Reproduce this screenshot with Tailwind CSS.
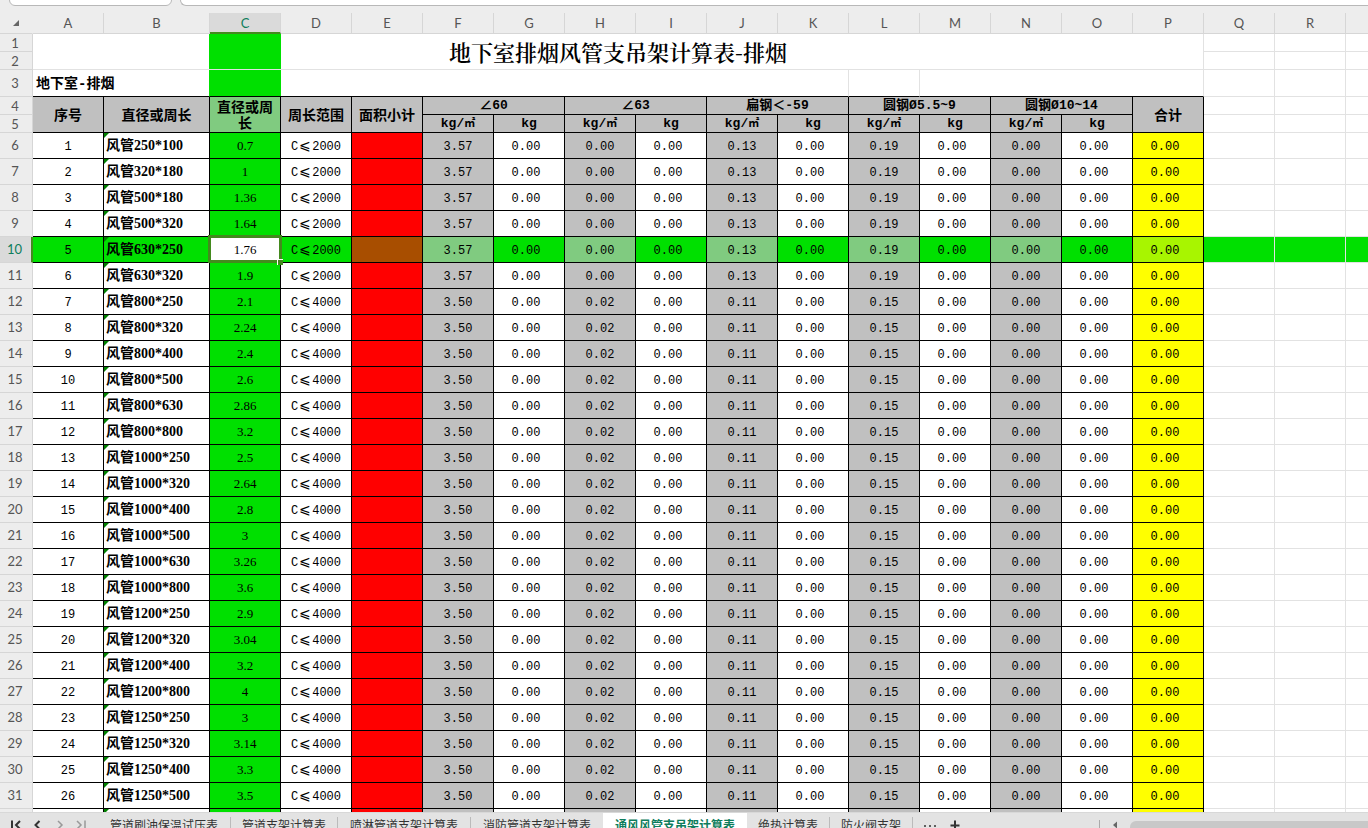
<!DOCTYPE html>
<html lang="zh-CN">
<head>
<meta charset="utf-8">
<title>地下室排烟风管支吊架计算表</title>
<script src="https://cdn.jsdelivr.net/npm/@tailwindcss/browser@4"></script>
</head>
<body class="flex h-screen flex-col overflow-hidden bg-white font-['Liberation_Mono','Noto_Sans_CJK_SC',monospace] text-xs text-black">

<header class="h-[13px] shrink-0 bg-[#ededed]">
  <div class="flex h-1.5 items-end gap-2 overflow-hidden pl-[9px]">
    <input aria-label="名称框" class="h-7 w-[163px] shrink-0 rounded-md border border-[#b8b8b8] bg-white">
    <input aria-label="编辑栏" class="h-7 min-w-0 flex-1 rounded-l-md border border-r-0 border-[#b8b8b8] bg-white">
  </div>
</header>

<main class="min-h-0 flex-1 overflow-hidden">
  <table class="w-full min-w-[1346px] table-fixed border-separate border-spacing-0">
    <colgroup>
      <col class="w-[33px]"><col class="w-[71px]"><col class="w-[106px]"><col class="w-[71px]">
      <col class="w-[71px]"><col class="w-[71px]"><col class="w-[71px]"><col class="w-[71px]">
      <col class="w-[71px]"><col class="w-[71px]"><col class="w-[71px]"><col class="w-[71px]">
      <col class="w-[71px]"><col class="w-[71px]"><col class="w-[71px]"><col class="w-[71px]">
      <col class="w-[71px]"><col class="w-[71px]"><col class="w-[71px]"><col>
    </colgroup>
    <thead>
      <tr id="letters" class="h-[21px]"></tr>
    </thead>
    <tbody id="sheet">
      <tr class="h-[18px]">
        <th class="border-r border-b border-[#d6d6d6] bg-[#ededed] p-0 pr-0.5 text-center font-['Lato','Noto_Sans_CJK_SC',sans-serif] text-[13px] leading-4 font-normal text-[#555]">1</th>
        <td colspan="16" rowspan="2" class="relative border-r border-b border-[#e2e2e2] p-0 text-center">
          <span class="absolute inset-y-0 left-[176px] w-[72px] bg-[#00e000]"></span>
          <h1 class="font-['Noto_Serif_CJK_SC','Noto_Sans_CJK_SC',sans-serif] text-[22px] leading-8 font-semibold">地下室排烟风管支吊架计算表-排烟</h1>
        </td>
        <td class="border-r border-b border-[#e2e2e2]"></td><td class="border-r border-b border-[#e2e2e2]"></td><td class="border-b border-[#e2e2e2]"></td>
      </tr>
      <tr class="h-[18px]">
        <th class="border-r border-b border-[#d6d6d6] bg-[#ededed] p-0 pr-0.5 text-center font-['Lato','Noto_Sans_CJK_SC',sans-serif] text-[13px] leading-4 font-normal text-[#555]">2</th>
        <td class="border-r border-b border-[#e2e2e2]"></td><td class="border-r border-b border-[#e2e2e2]"></td><td class="border-b border-[#e2e2e2]"></td>
      </tr>
      <tr class="h-[27px]">
        <th class="border-r border-b border-[#d6d6d6] bg-[#ededed] p-0 pr-0.5 text-center font-['Lato','Noto_Sans_CJK_SC',sans-serif] text-[13px] leading-4 font-normal text-[#555]">3</th>
        <td colspan="2" class="border-r border-b border-r-[#00e000] border-b-black p-0 pt-0.5 pl-[3px] text-sm leading-5 font-bold">地下室-排烟</td>
        <td class="border-b border-black bg-[#00e000]"></td>
        <td colspan="8" class="border-r border-b border-r-[#e2e2e2] border-b-black"></td>
        <td class="border-r border-b border-r-[#e2e2e2] border-b-black"></td>
        <td colspan="4" class="border-r border-b border-r-[#e2e2e2] border-b-black"></td>
        <td class="border-r border-b border-[#e2e2e2]"></td><td class="border-r border-b border-[#e2e2e2]"></td><td class="border-b border-[#e2e2e2]"></td>
      </tr>
      <tr class="h-[18px] text-[13px] leading-4 font-bold">
        <th class="border-r border-b border-[#d6d6d6] bg-[#ededed] p-0 pr-0.5 text-center font-['Lato','Noto_Sans_CJK_SC',sans-serif] text-[13px] leading-4 font-normal text-[#555]">4</th>
        <th rowspan="2" class="border-r border-b border-black bg-[#c0c0c0] p-0 pt-0.5 text-sm leading-4">序号</th>
        <th rowspan="2" class="border-r border-b border-black bg-[#c0c0c0] p-0 pt-0.5 text-sm leading-4">直径或周长</th>
        <th rowspan="2" class="border-r border-b border-black bg-[#80cb80] p-0 px-1 pt-0.5 text-sm leading-4">直径或周长</th>
        <th rowspan="2" class="border-r border-b border-black bg-[#c0c0c0] p-0 pt-0.5 text-sm leading-4">周长范围</th>
        <th rowspan="2" class="border-r border-b border-black bg-[#c0c0c0] p-0 pt-0.5 text-sm leading-4">面积小计</th>
        <th colspan="2" class="border-r border-b border-black bg-[#c0c0c0] p-0 pt-px">∠60</th>
        <th colspan="2" class="border-r border-b border-black bg-[#c0c0c0] p-0 pt-px">∠63</th>
        <th colspan="2" class="border-r border-b border-black bg-[#c0c0c0] p-0 pt-px">扁钢＜-59</th>
        <th colspan="2" class="border-r border-b border-black bg-[#c0c0c0] p-0 pt-px">圆钢Ø5.5~9</th>
        <th colspan="2" class="border-r border-b border-black bg-[#c0c0c0] p-0 pt-px">圆钢Ø10~14</th>
        <th rowspan="2" class="border-r border-b border-black bg-[#c0c0c0] p-0 pt-0.5 text-sm leading-4">合计</th>
        <td class="border-r border-b border-[#e2e2e2]"></td><td class="border-r border-b border-[#e2e2e2]"></td><td class="border-b border-[#e2e2e2]"></td>
      </tr>
      <tr id="units" class="h-[18px] text-[13px] leading-4 font-bold">
        <th class="border-r border-b border-[#d6d6d6] bg-[#ededed] p-0 pr-0.5 text-center font-['Lato','Noto_Sans_CJK_SC',sans-serif] text-[13px] leading-4 font-normal text-[#555]">5</th>
      </tr>
    </tbody>
  </table>
</main>

<footer class="h-4 shrink-0 overflow-hidden bg-[#e3e3e3] font-['Noto_Sans_CJK_SC',sans-serif]">
  <div class="flex h-6 items-stretch border-t border-[#d8d8d8]">
    <nav aria-label="工作表导航" class="flex w-[98px] shrink-0 items-center gap-2.5 pl-2.5 text-[#333]">
      <button aria-label="第一个"><svg class="size-3" viewBox="0 0 12 12" fill="none" stroke="currentColor" stroke-width="2"><path d="M2 1.500V10.500M10 2 6 6l4 4"/></svg></button>
      <button aria-label="上一个"><svg class="size-3" viewBox="0 0 12 12" fill="none" stroke="currentColor" stroke-width="2"><path d="M7.500 2 3.500 6l4 4"/></svg></button>
      <button aria-label="下一个" class="text-[#999]"><svg class="size-3" viewBox="0 0 12 12" fill="none" stroke="currentColor" stroke-width="1.500"><path d="M4 2l4 4-4 4"/></svg></button>
      <button aria-label="最后一个" class="text-[#999]"><svg class="size-3" viewBox="0 0 12 12" fill="none" stroke="currentColor" stroke-width="1.500"><path d="M1 2l4 4-4 4M9 1.500v9"/></svg></button>
    </nav>
    <div class="flex shrink-0 items-center text-[#333]">
      <button class="border-r border-[#bbb] px-3 leading-4">管道刷油保温试压表</button>
      <button class="border-r border-[#bbb] px-[11px] leading-4">管道支架计算表</button>
      <button class="border-r border-[#bbb] px-3 leading-4">喷淋管道支架计算表</button>
      <button class="px-3 leading-4">消防管道支架计算表</button>
      <button class="h-full bg-white px-3 font-bold leading-4 text-[#0e7d5c]">通风风管支吊架计算表</button>
      <button class="border-r border-[#bbb] px-[11px] leading-4">绝热计算表</button>
      <button class="border-r border-[#bbb] px-[11px] leading-4">防火阀支架</button>
      <button aria-label="更多工作表" class="pl-2.5"><svg class="h-3 w-3.5" viewBox="0 0 14 12" fill="#333"><circle cx="2" cy="7" r="1"/><circle cx="7" cy="7" r="1"/><circle cx="12" cy="7" r="1"/></svg></button>
      <button aria-label="新建工作表" class="pl-3"><svg class="size-3" viewBox="0 0 12 12" fill="none" stroke="#333" stroke-width="2"><path d="M6 1.500v9M1.500 6.500h9"/></svg></button>
    </div>
    <div class="ml-auto flex w-[269px] shrink-0 items-center gap-2.5">
      <span class="h-2.5 w-px bg-[#aaa]"></span>
      <button aria-label="向左滚动"><svg class="size-2.5" viewBox="0 0 10 10"><path d="M7 1.500v7L3 5z" fill="#666"/></svg></button>
      <span class="mt-2 h-4 flex-1 rounded-l-md bg-[#c8c8c8]"></span>
    </div>
  </div>
</footer>

<script>
const letters = 'ABCDEFGHIJKLMNOPQR'.split('');
const HEAD = "border-r border-b border-[#d6d6d6] bg-[#ededed] p-0 text-center font-['Lato','Noto_Sans_CJK_SC',sans-serif] text-[13px] leading-4 font-normal text-[#555]";
const HEAD_ON = "border-r border-b-2 border-r-[#d6d6d6] border-b-[#438a1e] bg-[#dadada] p-0 text-center font-['Lato','Noto_Sans_CJK_SC',sans-serif] text-[13px] leading-4 font-normal text-[#0e7d5c]";
document.getElementById('letters').innerHTML =
  `<th aria-label="全选" class="border-b border-r border-[#d6d6d6] border-r-[#ededed] bg-[#ededed] p-0"><svg class="ml-3 size-2" viewBox="0 0 8 8"><path d="M7 1v6H1z" fill="#666"/></svg></th>` +
  letters.map(l => `<th class="${l === 'C' ? HEAD_ON : HEAD}">${l}</th>`).join('') +
  `<th class="border-b border-[#d6d6d6] bg-[#ededed]"></th>`;

const SPARE = '<td class="border-r border-b border-[#e2e2e2]"></td><td class="border-r border-b border-[#e2e2e2]"></td><td class="border-b border-[#e2e2e2]"></td>';
document.getElementById('units').insertAdjacentHTML('beforeend',
  '<th class="border-r border-b border-black bg-[#c0c0c0] p-0 pt-px">kg/<span class="text-[11px]">㎡</span></th><th class="border-r border-b border-black bg-[#c0c0c0] p-0 pt-px">kg</th>'.repeat(5) + SPARE);

const ducts = [
  ['250*100', '0.7'], ['320*180', '1'], ['500*180', '1.36'], ['500*320', '1.64'], ['630*250', '1.76'], ['630*320', '1.9'],
  ['800*250', '2.1'], ['800*320', '2.24'], ['800*400', '2.4'], ['800*500', '2.6'], ['800*630', '2.86'], ['800*800', '3.2'],
  ['1000*250', '2.5'], ['1000*320', '2.64'], ['1000*400', '2.8'], ['1000*500', '3'], ['1000*630', '3.26'], ['1000*800', '3.6'],
  ['1200*250', '2.9'], ['1200*320', '3.04'], ['1200*400', '3.2'], ['1200*800', '4'],
  ['1250*250', '3'], ['1250*320', '3.14'], ['1250*400', '3.3'], ['1250*500', '3.5'], null
];
const CELL = 'border-r border-b border-black p-0 pt-0.5 text-center leading-5';
const flag = '<span class="absolute top-0 left-0 size-[5px] bg-[#008000] [clip-path:polygon(0_0,100%_0,0_100%)]"></span>';

document.getElementById('sheet').insertAdjacentHTML('beforeend', ducts.map((d, i) => {
  const on = i === 4;
  const white = on ? 'bg-[#00e000]' : 'bg-white';
  const grey = on ? 'bg-[#80cb80]' : 'bg-[#c0c0c0]';
  const rates = i < 6 ? ['3.57', '0.00', '0.13', '0.19', '0.00'] : ['3.50', '0.02', '0.11', '0.15', '0.00'];
  const picked = on ? '<span class="absolute -top-0.5 -right-0.5 -bottom-px -left-0.5 z-10 border-3 border-[#438a1e]"></span><span class="absolute -right-[3px] -bottom-[3px] z-20 size-1.5 border-t border-l border-white bg-[#438a1e]"></span>' : '';
  const rowHead = on
    ? "border-r-2 border-b border-r-[#438a1e] border-b-[#d6d6d6] bg-[#dadada] p-0 pr-0.5 pb-0.5 text-center font-['Lato','Noto_Sans_CJK_SC',sans-serif] text-[13px] leading-4 font-normal text-[#0e7d5c]"
    : "border-r border-b border-[#d6d6d6] bg-[#ededed] p-0 pr-0.5 pb-0.5 text-center font-['Lato','Noto_Sans_CJK_SC',sans-serif] text-[13px] leading-4 font-normal text-[#555]";
  return `<tr class="h-[26px]">
    <th class="${rowHead}">${d ? i + 6 : ''}</th>
    <td class="${CELL} ${white}">${d ? i + 1 : ''}</td>
    <td class="relative border-r border-b border-black p-0 pl-0.5 font-['Liberation_Serif','Noto_Sans_CJK_SC',serif] text-sm leading-5 font-bold ${white}">${flag}${d ? '风管' + d[0] : ''}</td>
    <td class="relative border-r border-b border-black p-0 text-center font-['Liberation_Serif',serif] text-[13px] leading-5 ${on ? 'bg-white' : 'bg-[#00e000]'}">${d ? d[1] : ''}${picked}</td>
    <td class="${CELL} ${white}">${d ? `C<span class="inline-block w-3.5 text-center font-['Noto_Sans_CJK_SC',sans-serif] text-sm leading-4 font-light">⩽</span>${i < 6 ? 2000 : 4000}` : ''}</td>
    <td class="border-r border-b border-black ${on ? 'bg-[#a84e00]' : 'bg-[#ff0000]'}"></td>
    ${rates.map(r => `<td class="${CELL} ${grey}">${d ? r : ''}</td><td class="${CELL} pr-1.5 ${white}">${d ? '0.00' : ''}</td>`).join('')}
    <td class="${CELL} pr-1.5 ${on ? 'bg-[#a8f500]' : 'bg-[#ffff00]'}">${d ? '0.00' : ''}</td>
    ${on ? '<td class="border-r border-b border-[#e2e2e2] bg-[#00e000]"></td><td class="border-r border-b border-[#e2e2e2] bg-[#00e000]"></td><td class="border-b border-[#e2e2e2] bg-[#00e000]"></td>' : SPARE}
  </tr>`;
}).join(''));
</script>
</body>
</html>
